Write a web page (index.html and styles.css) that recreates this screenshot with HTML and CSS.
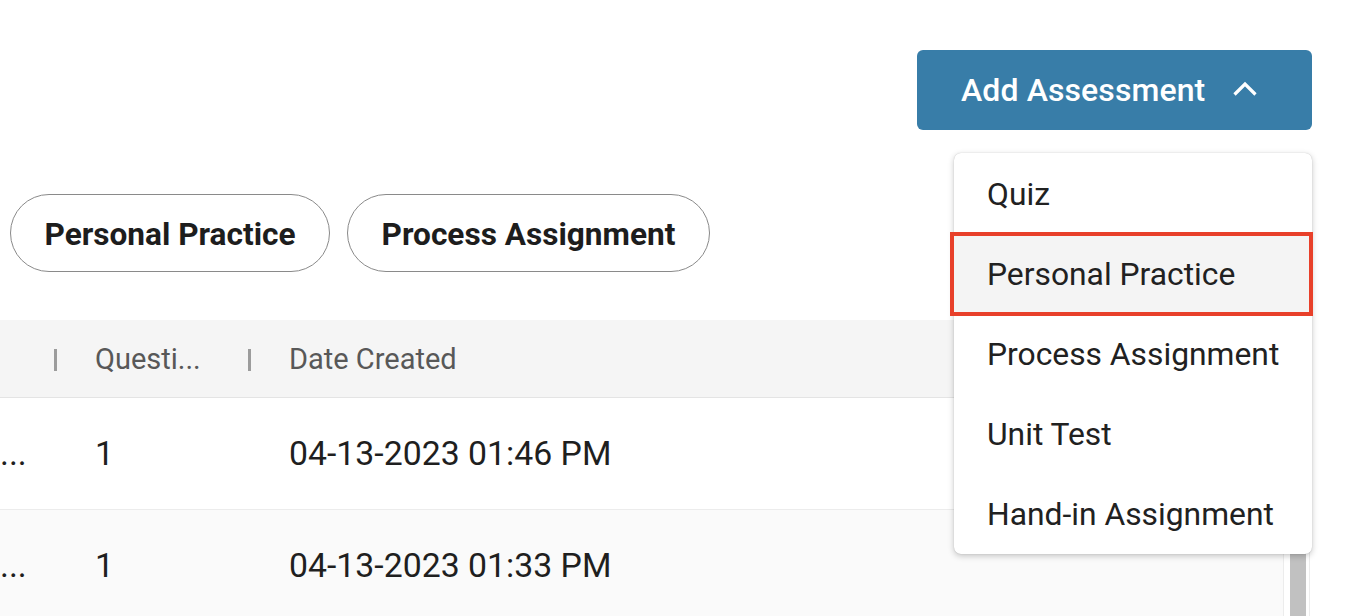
FILE: index.html
```html
<!DOCTYPE html>
<html lang="en">
<head>
<meta charset="utf-8">
<title>Assessments</title>
<link rel="stylesheet" href="styles.css">
</head>
<body>
<div class="page">
  <div class="toolbar">
    <div class="add-wrap">
      <button class="add-btn" type="button">
        <span class="add-label">Add Assessment</span>
        <svg class="chev" width="26" height="16" viewBox="0 0 26 16" aria-hidden="true"><path d="M2.5 13.5 L13 3 L23.5 13.5" fill="none" stroke="#fff" stroke-width="3.2"/></svg>
      </button>
      <ul class="menu">
        <li class="menu-item">Quiz</li>
        <li class="menu-item selected">Personal Practice</li>
        <li class="menu-item">Process Assignment</li>
        <li class="menu-item">Unit Test</li>
        <li class="menu-item">Hand-in Assignment</li>
      </ul>
    </div>
  </div>

  <div class="chips">
    <span class="chip chip-a">Personal Practice</span>
    <span class="chip chip-b">Process Assignment</span>
  </div>

  <div class="table-area">
    <div class="table">
      <div class="row head">
        <div class="cell c1"><span class="sep"></span></div>
        <div class="cell c2">Questi...<span class="sep"></span></div>
        <div class="cell c3">Date Created</div>
      </div>
      <div class="row body">
        <div class="cell c1">...</div>
        <div class="cell c2">1</div>
        <div class="cell c3">04-13-2023 01:46 PM</div>
      </div>
      <div class="row body alt">
        <div class="cell c1">...</div>
        <div class="cell c2">1</div>
        <div class="cell c3">04-13-2023 01:33 PM</div>
      </div>
    </div>
    <div class="scroll-track"><div class="scroll-thumb"></div></div>
  </div>
</div>
</body>
</html>
```

FILE: styles.css
```css
* { box-sizing: border-box; }
html, body { margin: 0; padding: 0; background: #fff; }
body {
  font-family: Roboto, "Liberation Sans", Arial, sans-serif;
  color: #212121;
  overflow: hidden;
  width: 1368px;
  height: 616px;
}
.page { position: relative; height: 616px; overflow: hidden; }

.toolbar {
  display: flex;
  justify-content: flex-end;
  padding: 50px 56px 0 0;
  height: 194px;
}
.add-wrap { position: relative; }
.add-btn {
  width: 395px;
  height: 80px;
  background: #387da8;
  border: none;
  border-radius: 6px;
  color: #fff;
  display: flex;
  align-items: center;
  padding: 0 0 0 44px;
  font-family: inherit;
  font-size: 32px;
  font-weight: 500;
  letter-spacing: 0.1px;
}
.add-label { margin-right: 27px; }
.chev { display: block; margin-top: -2px; }

.menu {
  position: absolute;
  z-index: 5;
  top: 103px;
  left: 37px;
  width: 358px;
  margin: 0;
  padding: 0;
  list-style: none;
  background: #fff;
  border-radius: 7px;
  box-shadow: 0 2px 6px rgba(0,0,0,0.22), 0 0 1px rgba(0,0,0,0.25);
}
.menu-item {
  position: relative;
  height: 80px;
  display: flex;
  align-items: center;
  padding-left: 33px;
  font-size: 31.8px;
  color: #212121;
}
.menu-item:first-child { margin-top: 1px; }
.menu-item.selected { background: #f4f4f4; }
.menu-item.selected::after {
  content: "";
  position: absolute;
  left: -4px;
  right: -1px;
  top: -2px;
  bottom: -2px;
  border: 4px solid #e8402a;
}

.chips {
  display: flex;
  gap: 17px;
  padding-left: 10px;
  height: 126px;
}
.chip {
  height: 78px;
  border: 1.5px solid #8a8a8a;
  border-radius: 40px;
  display: flex;
  align-items: center;
  justify-content: center;
  font-size: 31.6px;
  font-weight: 700;
  color: #1d1d1d;
  padding-top: 2px;
}
.chip-a { width: 320px; }
.chip-b { width: 363px; }

.table-area {
  display: flex;
  height: 296px;
  overflow: hidden;
}
.table { width: 1283px; }
.row {
  display: grid;
  grid-template-columns: 55px 194px 1fr;
  align-items: center;
}
.head {
  height: 78px;
  background: #f5f5f5;
  border-bottom: 1.5px solid #e4e4e4;
  font-size: 29px;
  color: #585858;
}
.body {
  height: 112px;
  border-bottom: 1.5px solid #ececec;
  font-size: 33.8px;
  color: #1f1f1f;
}
.alt { background: #fafafa; }
.cell {
  position: relative;
  height: 100%;
  display: flex;
  align-items: center;
  white-space: nowrap;
}
.c1 { padding-left: 0; }
.c2, .c3 { padding-left: 40px; }
.sep {
  position: absolute;
  right: -2px;
  top: 29px;
  width: 3px;
  height: 22px;
  background: #9c9c9c;
}
.scroll-track {
  width: 27px;
  height: 296px;
  border-left: 1px solid #ececec;
  border-right: 1px solid #ececec;
  padding: 0 4px 0 6px;
}
.scroll-thumb {
  margin-top: 100px;
  width: 16px;
  height: 300px;
  background: #c1c1c1;
}
```
